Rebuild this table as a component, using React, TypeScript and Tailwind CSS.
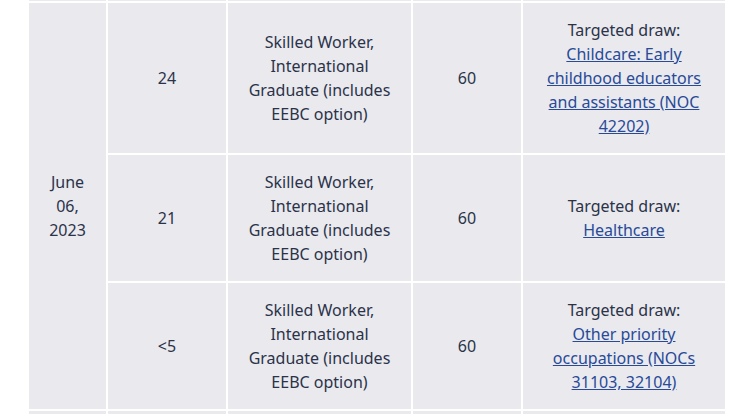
import React from "react";

type Row = {
  rank: string;
  program: string;
  score: string;
  link: string;
};

const rows: Row[] = [
  {
    rank: "24",
    program: "Skilled Worker, International Graduate (includes EEBC option)",
    score: "60",
    link: "Childcare: Early childhood educators and assistants (NOC 42202)",
  },
  {
    rank: "21",
    program: "Skilled Worker, International Graduate (includes EEBC option)",
    score: "60",
    link: "Healthcare",
  },
  {
    rank: "<5",
    program: "Skilled Worker, International Graduate (includes EEBC option)",
    score: "60",
    link: "Other priority occupations (NOCs 31103, 32104)",
  },
];

const cell = "bg-[#e9e9ee] px-[10px] py-[15px] text-center align-middle";

export default function App() {
  return (
    <div
      className="h-[414px] w-full overflow-hidden bg-white text-[16px] leading-6 text-[#2b3349]"
      style={{ fontFamily: '"Noto Sans", "Open Sans", sans-serif' }}
    >
      <table className="ml-[27px] mt-[-2px] w-[700px] table-fixed border-separate border-spacing-[2px]">
        <colgroup>
          <col className="w-[77px]" />
          <col className="w-[118px]" />
          <col className="w-[183px]" />
          <col className="w-[108px]" />
          <col className="w-[202px]" />
        </colgroup>
        <tbody>
          {/* tail of the previous row */}
          <tr className="h-[1px]">
            <td className="h-[1px] bg-[#e9e9ee] p-0" />
            <td className="h-[1px] bg-[#e9e9ee] p-0" />
            <td className="h-[1px] bg-[#e9e9ee] p-0" />
            <td className="h-[1px] bg-[#e9e9ee] p-0" />
            <td className="h-[1px] bg-[#e9e9ee] p-0" />
          </tr>
          {rows.map((r, i) => (
            <tr key={i}>
              {i === 0 && (
                <td rowSpan={3} className={cell}>
                  June 06, 2023
                </td>
              )}
              <td className={cell}>{r.rank}</td>
              <td className={cell}>{r.program}</td>
              <td className={cell}>{r.score}</td>
              <td className={cell}>
                Targeted draw:
                <br />
                <a href="#" className="text-[#284a98] underline">
                  {r.link}
                </a>
              </td>
            </tr>
          ))}
          {/* start of the next row */}
          <tr>
            <td className={cell}>&nbsp;</td>
            <td className={cell}>&nbsp;</td>
            <td className={cell}>&nbsp;</td>
            <td className={cell}>&nbsp;</td>
            <td className={cell}>&nbsp;</td>
          </tr>
        </tbody>
      </table>
    </div>
  );
}
